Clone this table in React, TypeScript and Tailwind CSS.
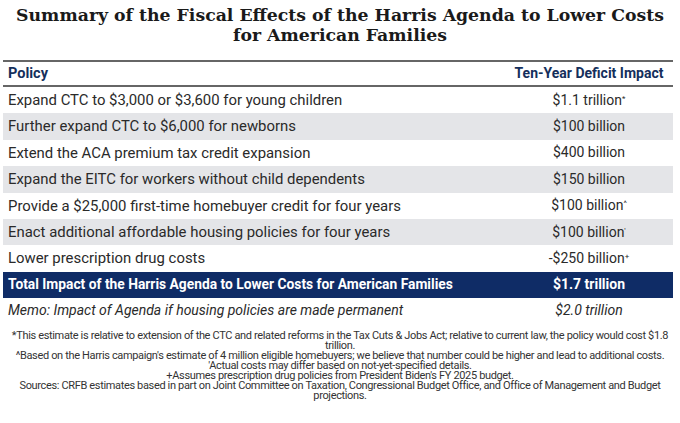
import React from "react";

const rows: { p: string; v: string; sup?: string; gray?: boolean }[] = [
  { p: "Expand CTC to $3,000 or $3,600 for young children", v: "$1.1 trillion", sup: "*" },
  { p: "Further expand CTC to $6,000 for newborns", v: "$100 billion", gray: true },
  { p: "Extend the ACA premium tax credit expansion", v: "$400 billion" },
  { p: "Expand the EITC for workers without child dependents", v: "$150 billion", gray: true },
  { p: "Provide a $25,000 first-time homebuyer credit for four years", v: "$100 billion", sup: "^" },
  { p: "Enact additional affordable housing policies for four years", v: "$100 billion", sup: "'", gray: true },
  { p: "Lower prescription drug costs", v: "-$250 billion", sup: "+" },
];

export default function App() {
  return (
    <div className="w-[680px] h-[423px] bg-white overflow-hidden" style={{ fontFamily: 'Roboto, "Liberation Sans", sans-serif' }}>
      <h1
        className="pt-[5px] text-center text-[17.3px] leading-[20px] font-bold whitespace-nowrap text-[#1a1a1a]"
        style={{ fontFamily: '"DejaVu Serif", serif' }}
      >
        Summary of the Fiscal Effects of the Harris Agenda to Lower Costs
        <br />
        for American Families
      </h1>
      <div className="mx-[3px] mt-[15px] w-[670px] border-t-2 border-[#666]">
        <div className="flex h-[25px] items-center border-b-2 border-[#666] text-[14px] font-bold text-[#142f5c] whitespace-nowrap">
          <div className="flex-1 pl-[5px] text-[14.5px]">Policy</div>
          <div className="w-[168px] text-center">Ten-Year Deficit Impact</div>
        </div>
        {rows.map((r, i) => (
          <div key={i} className={`flex h-[26.4px] items-center text-[#2a2a2a] whitespace-nowrap ${r.gray ? "bg-[#e4e5e8]" : ""}`}>
            <div className="flex-1 pl-[5px] text-[14.9px]">{r.p}</div>
            <div className="w-[168px] text-center text-[14px]">
              {r.v}
              {r.sup && <sup className="text-[8px]">{r.sup}</sup>}
            </div>
          </div>
        ))}
        <div className="flex h-[26px] items-center bg-[#0f2c66] text-[13.8px] font-bold text-white whitespace-nowrap">
          <div className="flex-1 pl-[5px]">Total Impact of the Harris Agenda to Lower Costs for American Families</div>
          <div className="w-[168px] text-center text-[14px]">$1.7 trillion</div>
        </div>
        <div className="flex h-[26px] items-center text-[14px] italic text-[#2a2a2a] whitespace-nowrap">
          <div className="flex-1 pl-[5px]">Memo: Impact of Agenda if housing policies are made permanent</div>
          <div className="w-[168px] text-center">$2.0 trillion</div>
        </div>
      </div>
      <div className="mt-[7px] px-[8px] text-center text-[11px] leading-[10px] tracking-[-0.35px] text-[#333]">
        <p>*This estimate is relative to extension of the CTC and related reforms in the Tax Cuts &amp; Jobs Act; relative to current law, the policy would cost $1.8 trillion.</p>
        <p>^Based on the Harris campaign's estimate of 4 million eligible homebuyers; we believe that number could be higher and lead to additional costs.</p>
        <p>'Actual costs may differ based on not-yet-specified details.</p>
        <p>+Assumes prescription drug policies from President Biden's FY 2025 budget.</p>
        <p>Sources: CRFB estimates based in part on Joint Committee on Taxation, Congressional Budget Office, and Office of Management and Budget projections.</p>
      </div>
    </div>
  );
}
